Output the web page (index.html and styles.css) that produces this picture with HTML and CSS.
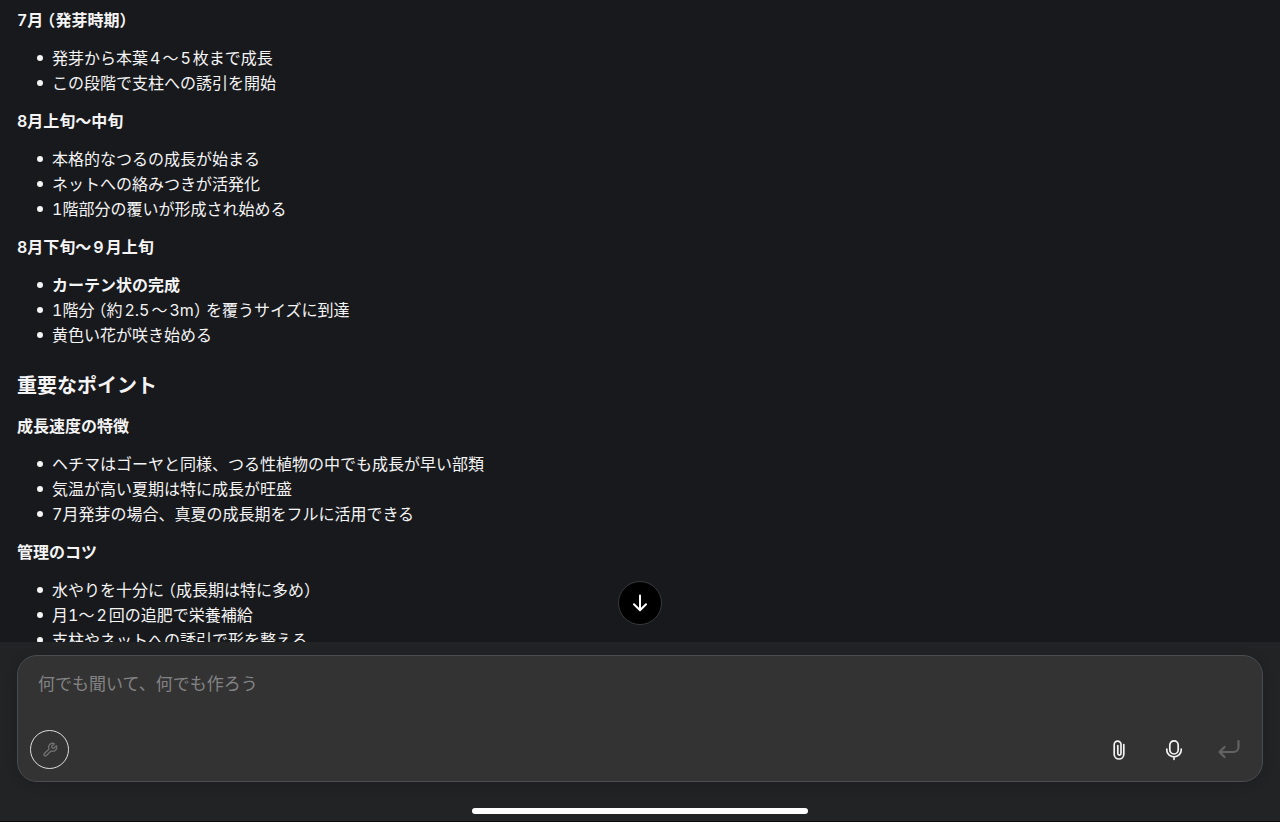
FILE: index.html
```html
<!DOCTYPE html>
<html lang="ja">
<head>
<meta charset="utf-8">
<meta name="viewport" content="width=device-width, initial-scale=1">
<title>チャット</title>
<link rel="stylesheet" href="styles.css">
</head>
<body>
<div class="app">
  <main class="thread">
    <article class="message">
      <h4>7月<span class="open">（</span>発芽時期<span class="close">）</span></h4>
      <ul>
        <li>発芽から本葉<span class="num">4</span>〜<span class="num">5</span>枚まで成長</li>
        <li>この段階で支柱への誘引を開始</li>
      </ul>
      <h4>8月上旬〜中旬</h4>
      <ul>
        <li>本格的なつるの成長が始まる</li>
        <li>ネットへの絡みつきが活発化</li>
        <li>1階部分の覆いが形成され始める</li>
      </ul>
      <h4>8月下旬〜<span class="num">9</span>月上旬</h4>
      <ul>
        <li><strong>カーテン状の完成</strong></li>
        <li>1階分<span class="open">（</span>約<span class="num">2.5</span>〜<span class="num">3m</span><span class="close">）</span>を覆うサイズに到達</li>
        <li>黄色い花が咲き始める</li>
      </ul>
      <h3>重要なポイント</h3>
      <h4>成長速度の特徴</h4>
      <ul>
        <li>ヘチマはゴーヤと同様、つる性植物の中でも成長が早い部類</li>
        <li>気温が高い夏期は特に成長が旺盛</li>
        <li>7月発芽の場合、真夏の成長期をフルに活用できる</li>
      </ul>
      <h4>管理のコツ</h4>
      <ul>
        <li>水やりを十分に<span class="open">（</span>成長期は特に多め<span class="close">）</span></li>
        <li>月1〜<span class="num">2</span>回の追肥で栄養補給</li>
        <li>支柱やネットへの誘引で形を整える</li>
      </ul>
    </article>
  </main>
  <footer class="dock">
    <button class="jump" type="button" aria-label="一番下へ">
      <svg width="20" height="20" viewBox="0 0 20 20"><path d="M10 2.5V17M4 11.2L10 17.2L16 11.2"/></svg>
    </button>
    <form class="composer">
      <textarea class="prompt" rows="1" aria-label="メッセージ" placeholder="何でも聞いて、何でも作ろう"></textarea>
      <div class="toolbar">
        <button class="tools" type="button" aria-label="ツール">
          <svg width="16" height="16" viewBox="0 0 24 24"><path d="M14.7 6.3a1 1 0 0 0 0 1.4l1.6 1.6a1 1 0 0 0 1.4 0l3.77-3.77a6 6 0 0 1-7.94 7.94l-6.91 6.91a2.12 2.12 0 0 1-3-3l6.91-6.91a6 6 0 0 1 7.94-7.94l-3.76 3.76z"/></svg>
        </button>
        <div class="actions">
          <button class="action" type="button" aria-label="ファイルを添付">
            <svg width="20" height="24" viewBox="0 0 20 24"><path d="M14.800 6.500V16.200A4.800 4.800 0 0 1 5.200 16.200V6.500A3.400 3.400 0 0 1 12 6.500V15.500A1.600 1.600 0 0 1 8.800 15.500V7.500"/></svg>
          </button>
          <button class="action" type="button" aria-label="音声入力">
            <svg width="20" height="24" viewBox="0 0 20 24"><rect x="5.800" y="2.800" width="8.400" height="13.200" rx="4.200"/><path d="M2.800 11V12.200A7.200 6.600 0 0 0 17.200 12.200V11M10 19V21.300"/></svg>
          </button>
          <button class="action send" type="submit" aria-label="送信" disabled>
            <svg width="24" height="24" viewBox="0 0 24 24"><path d="M21.500 3V9A5 5 0 0 1 16.500 14H3M7.500 9L2.500 14L7.500 19"/></svg>
          </button>
        </div>
      </div>
    </form>
    <div class="home-bar"></div>
  </footer>
</div>
</body>
</html>
```
FILE: styles.css
```css
* {
  box-sizing: border-box;
}

body {
  margin: 0;
  background: #18191c;
  color: #f4f4f5;
  font: 16px/25px Inter, "Noto Sans CJK JP", sans-serif;
  font-variant-numeric: tabular-nums;
}

.app {
  display: flex;
  flex-direction: column;
  height: 100vh;
  border-bottom: 1px solid #0b0b0c;
}

.thread {
  flex: 1;
  min-height: 0;
  overflow: hidden;
}

.message {
  padding: 8px 17px;
}

h3,
h4,
ul {
  margin: 0 0 13px;
}

h4 {
  font-size: 16px;
  font-weight: 600;
}

h3 {
  margin: 24px 0 14px;
  font-size: 20px;
  line-height: 28px;
  font-weight: 600;
}

ul {
  padding-left: 35px;
  list-style: none;
}

li {
  position: relative;
}

li::before {
  content: "";
  position: absolute;
  left: -15px;
  top: 9px;
  width: 6px;
  height: 6px;
  border-radius: 50%;
  background: #f4f4f5;
}

strong {
  font-weight: 600;
}

.num {
  margin-inline: 2px;
}

.open,
.close {
  font-feature-settings: "halt";
}

.open {
  margin-left: 4px;
}

.close {
  margin-right: 4px;
}

.num + .close {
  margin-left: -2px;
}

.dock {
  position: relative;
  display: flex;
  flex-direction: column;
  padding: 13px 17px 7px;
  background: #222325;
}

button {
  display: grid;
  place-items: center;
  padding: 0;
  border: 0;
  background: none;
  color: inherit;
}

svg {
  fill: none;
  stroke: currentColor;
  stroke-width: 2;
  stroke-linecap: round;
  stroke-linejoin: round;
}

.jump {
  position: absolute;
  left: 50%;
  bottom: calc(100% + 17px);
  width: 44px;
  height: 44px;
  transform: translateX(-50%);
  border: 1px solid #38393b;
  border-radius: 50%;
  background: #000;
  color: #fff;
}

.composer {
  display: flex;
  flex-direction: column;
  justify-content: space-between;
  gap: 32px;
  padding: 15px 12px 12px;
  border: 1px solid #4b4c4f;
  border-radius: 20px;
  background: #333;
  box-shadow: 0 2px 12px rgb(0 0 0 / 15%);
}

.prompt {
  display: block;
  width: 100%;
  height: 27px;
  padding: 0 8px;
  border: 0;
  outline: 0;
  resize: none;
  overflow: hidden;
  background: none;
  color: #f4f4f5;
  font: 17px/27px Inter, "Noto Sans CJK JP", sans-serif;
}

.prompt::placeholder {
  color: #838385;
}

.toolbar,
.actions {
  display: flex;
  align-items: center;
  justify-content: space-between;
}

.actions {
  gap: 16px;
  padding-right: 2px;
}

.tools {
  width: 39px;
  height: 39px;
  border: 1px solid #dededf;
  border-radius: 50%;
  color: #717173;
}

.action {
  width: 39px;
  height: 39px;
  color: #f4f4f5;
}

.action svg {
  stroke-width: 1.7;
}

.send {
  color: #636364;
}

.send svg {
  stroke-width: 2.2;
}

.home-bar {
  align-self: center;
  width: 27%;
  height: 6px;
  margin-top: 26px;
  border-radius: 3px;
  background: #fff;
}
```
